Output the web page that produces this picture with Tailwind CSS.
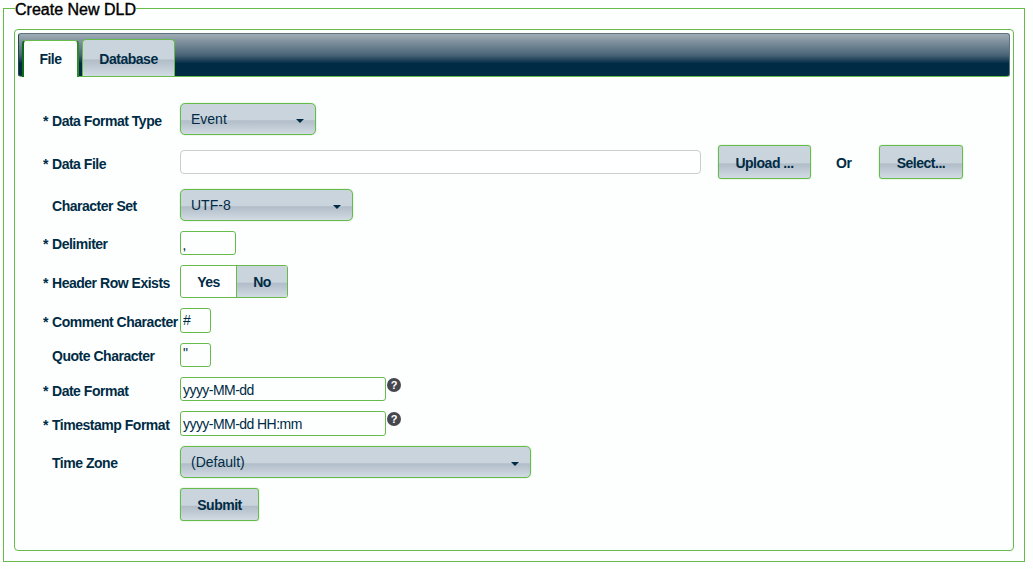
<!DOCTYPE html>
<html><head><meta charset="utf-8"><script src="https://cdn.jsdelivr.net/npm/@tailwindcss/browser@4"></script></head>
<body class="bg-[#fcfffe] font-['Liberation_Sans',Arial,sans-serif] text-[14px] text-[#002b45] overflow-hidden">
<div class="h-[569px] w-[1033px] px-[3px] pt-0">
<fieldset class="w-[1022px] h-[562px] border border-[#66bb4a] px-[10px] pb-[10px] pt-[13px] m-0">
<legend class="ml-[1px] px-0 h-[16px] text-[16px] leading-[20px] font-normal text-black [-webkit-text-stroke:0.4px_black]">Create New DLD</legend>
<div class="h-[522px] border border-[#66bb4a] rounded-[4px] pt-[3px] px-[3px]">
  <div class="h-[44px] border border-[#66bb4a] border-t-[#5d7383] border-l-[#1d4a3c] border-r-[#5d7383] border-b-[#66bb4a] rounded-[3px] bg-gradient-to-b from-[#a0acb4] via-[#4a6578] via-50% to-[#002b45] to-70% flex items-end gap-[3px] pl-[3px]">
    <div class="w-[57px] h-[37px] bg-[#fcfffe] border-x-2 border-t border-[#66bb4a] border-l-[#0f6a1c] border-r-[#2f8a2a] rounded-t-[4px] -mb-px tracking-[-0.48px] font-bold flex items-center justify-center">File</div>
    <div class="w-[93px] h-[37px] pt-[3px] bg-[linear-gradient(#cad4dd_52%,#b1bdc9_56%,#d2dbe3)] border-x border-t border-[#66bb4a] rounded-t-[4px] tracking-[-0.48px] font-bold flex items-center justify-center">Database</div>
  </div>
  <div class="flex flex-col gap-[10px] pt-[26px] pl-[24px]">
    <div class="flex h-[32px]"><label class="w-[138px] pl-[1px] pt-[8px] tracking-[-0.48px] font-bold flex"><span class="w-[9px]">*</span>Data Format Type</label>
      <div class="w-[136px] flex items-center justify-between pl-[10px] pr-[11px] border border-[#66bb4a] shadow-[0_0_1px_#66bb4a] rounded-[5px] bg-[linear-gradient(#cad4dd_52%,#b1bdc9_56%,#d2dbe3)]"><span>Event</span><span class="w-0 h-0 border-x-[4px] border-x-transparent border-t-[4px] border-t-[#002b45] mt-[3px]"></span></div></div>
    <div class="flex h-[34px]"><label class="w-[138px] pl-[1px] pt-[9px] tracking-[-0.48px] font-bold flex"><span class="w-[9px]">*</span>Data File</label>
      <div class="flex items-center"><input class="w-[521px] h-[24px] border border-[#cccccc] rounded-[4px] bg-white/50 outline-none" value=""></div>
      <button class="ml-[17px] w-[93px] pt-[3px] border border-[#66bb4a] shadow-[0_0_1px_#66bb4a] rounded-[3px] tracking-[-0.48px] font-bold bg-[linear-gradient(#cad4dd_52%,#b1bdc9_56%,#d2dbe3)]">Upload ...</button>
      <span class="ml-[25px] w-[43px] pt-[2px] tracking-[-0.48px] font-bold flex items-center">Or</span>
      <button class="w-[84px] pt-[2px] border border-[#66bb4a] shadow-[0_0_1px_#66bb4a] rounded-[3px] tracking-[-0.48px] font-bold bg-[linear-gradient(#cad4dd_52%,#b1bdc9_56%,#d2dbe3)]">Select...</button></div>
    <div class="flex h-[32px]"><label class="w-[138px] pl-[10px] pt-[7px] tracking-[-0.48px] font-bold">Character Set</label>
      <div class="w-[173px] flex items-center justify-between pl-[10px] pr-[11px] border border-[#66bb4a] shadow-[0_0_1px_#66bb4a] rounded-[5px] bg-[linear-gradient(#cad4dd_52%,#b1bdc9_56%,#d2dbe3)]"><span>UTF-8</span><span class="w-0 h-0 border-x-[4px] border-x-transparent border-t-[4px] border-t-[#002b45] mt-[3px]"></span></div></div>
    <div class="flex h-[24px]"><label class="w-[138px] pl-[1px] pt-[3px] tracking-[-0.48px] font-bold flex"><span class="w-[9px]">*</span>Delimiter</label>
      <input class="w-[56px] border border-[#66bb4a] rounded-[3px] pl-[2px] text-[10px] font-bold pt-[7px] outline-none bg-transparent" value=","></div>
    <div class="flex h-[33px]"><label class="w-[138px] pl-[1px] pt-[8px] tracking-[-0.48px] font-bold flex"><span class="w-[9px]">*</span>Header Row Exists</label>
      <div class="flex border border-[#66bb4a] rounded-[3px] tracking-[-0.48px] font-bold"><span class="w-[56px] pt-[1px] bg-white border-r border-[#66bb4a] rounded-l-[3px] flex items-center justify-center">Yes</span><span class="w-[50px] pt-[1px] bg-[linear-gradient(#cad4dd_52%,#b1bdc9_56%,#d2dbe3)] rounded-r-[3px] flex items-center justify-center">No</span></div></div>
    <div class="flex h-[25px]"><label class="w-[138px] pl-[1px] pt-[4px] tracking-[-0.48px] font-bold flex whitespace-nowrap"><span class="w-[9px]">*</span>Comment Character</label>
      <input class="w-[31px] border border-[#66bb4a] rounded-[3px] pl-[2px] tracking-[-0.55px] outline-none bg-transparent" value="#"></div>
    <div class="flex h-[24px]"><label class="w-[138px] pl-[10px] pt-[3px] tracking-[-0.48px] font-bold">Quote Character</label>
      <input class="w-[31px] border border-[#66bb4a] rounded-[3px] pl-[2px] pb-[3px] tracking-[-0.55px] outline-none bg-transparent" value="&quot;"></div>
    <div class="flex h-[24px]"><label class="w-[138px] pl-[1px] pt-[4px] tracking-[-0.48px] font-bold flex"><span class="w-[9px]">*</span>Date Format</label>
      <input class="w-[206px] border border-[#66bb4a] rounded-[3px] pl-[2px] pt-[2px] tracking-[-0.55px] outline-none bg-transparent" value="yyyy-MM-dd">
      <span class="ml-[1px] mt-[1px] w-[14px] h-[14px] rounded-full bg-[#47474f] text-white text-[11px] leading-[14px] font-bold text-center">?</span></div>
    <div class="flex h-[25px]"><label class="w-[138px] pl-[1px] pt-[4px] tracking-[-0.48px] font-bold flex"><span class="w-[9px]">*</span>Timestamp Format</label>
      <input class="w-[206px] border border-[#66bb4a] rounded-[3px] pl-[2px] pt-[2px] tracking-[-0.55px] outline-none bg-transparent" value="yyyy-MM-dd HH:mm">
      <span class="ml-[1px] mt-[1px] w-[14px] h-[14px] rounded-full bg-[#47474f] text-white text-[11px] leading-[14px] font-bold text-center">?</span></div>
    <div class="flex h-[32px]"><label class="w-[138px] pl-[10px] pt-[7px] tracking-[-0.48px] font-bold">Time Zone</label>
      <div class="w-[351px] flex items-center justify-between pl-[10px] pr-[11px] border border-[#66bb4a] shadow-[0_0_1px_#66bb4a] rounded-[5px] bg-[linear-gradient(#cad4dd_52%,#b1bdc9_56%,#d2dbe3)]"><span>(Default)</span><span class="w-0 h-0 border-x-[4px] border-x-transparent border-t-[4px] border-t-[#002b45] mt-[3px]"></span></div></div>
    <div class="flex h-[33px] pl-[138px]"><button class="w-[79px] pt-[2px] border border-[#66bb4a] shadow-[0_0_1px_#66bb4a] rounded-[3px] tracking-[-0.48px] font-bold bg-[linear-gradient(#cad4dd_52%,#b1bdc9_56%,#d2dbe3)]">Submit</button></div>
  </div>
</div>
</fieldset>
</div>
</body></html>
